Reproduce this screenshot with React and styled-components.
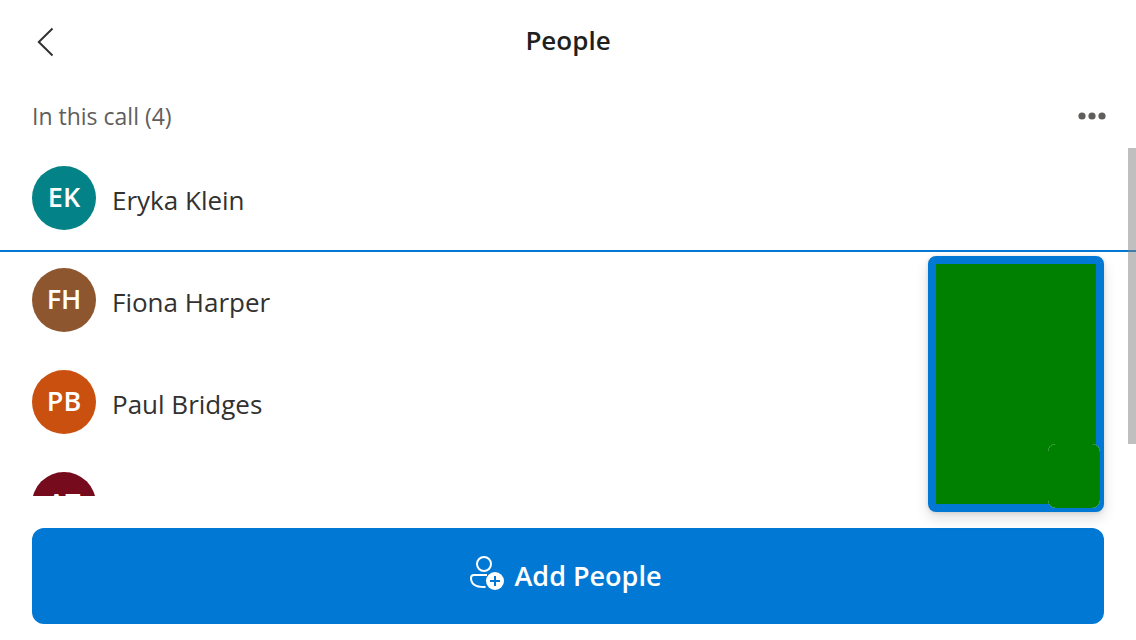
import React from 'react';
import styled, { createGlobalStyle } from 'styled-components';

const GlobalStyle = createGlobalStyle`
  *, *::before, *::after { box-sizing: border-box; }
  body {
    margin: 0;
    background: #fff;
    color: #323130;
    font-family: "Segoe UI", "Open Sans", "Noto Sans", sans-serif;
  }
  button { font: inherit; border: 0; padding: 0; cursor: pointer; }
`;

const Pane = styled.main`
  position: relative;
  display: flex;
  flex-direction: column;
  height: 100vh;
  overflow: hidden;
`;

const Header = styled.header`
  display: grid;
  grid-template-columns: 64px 1fr 64px;
  align-items: center;
  height: 84px;
  flex: none;
`;

const BackButton = styled.button`
  display: flex;
  justify-content: flex-end;
  padding-right: 8px;
  background: none;
  color: #323130;
`;

const Title = styled.h1`
  margin: 0;
  padding-bottom: 4px;
  font-size: 26px;
  line-height: 36px;
  font-weight: 600;
  text-align: center;
  color: #201f1e;
`;

const Subheader = styled.div`
  display: flex;
  align-items: center;
  justify-content: space-between;
  height: 64px;
  padding: 0 28px 0 32px;
  flex: none;
  color: #605e5c;
`;

const Subtitle = styled.h2`
  margin: 0;
  font-size: 23px;
  line-height: 32px;
  font-weight: 400;
`;

const MoreButton = styled.button`
  display: flex;
  background: none;
  color: inherit;
`;

const ListArea = styled.section`
  position: relative;
  flex: 1;
  min-height: 0;
  overflow: hidden;
`;

const List = styled.ul`
  margin: 0;
  padding: 2px 0 0;
  list-style: none;
`;

const Person = styled.li`
  display: flex;
  align-items: center;
  gap: 16px;
  padding: 16px 32px 20px;
  border-bottom: 2px solid ${(p) => (p.$active ? '#0078d4' : 'transparent')};
`;

const Avatar = styled.span`
  display: grid;
  place-items: center;
  width: 64px;
  height: 64px;
  padding-bottom: 2px;
  border-radius: 50%;
  background: ${(p) => p.$color};
  color: #fff;
  font-size: 27px;
  line-height: 36px;
  font-weight: 600;
`;

const Name = styled.span`
  padding-top: 4px;
  font-size: 26px;
  line-height: 36px;
`;

const ScrollThumb = styled.div`
  position: absolute;
  top: 0;
  right: 0;
  width: 8px;
  height: 85%;
  background: rgba(128, 128, 128, 0.5);
`;

const Footer = styled.footer`
  flex: none;
  padding: 32px 32px 16px;
`;

const AddButton = styled.button`
  display: flex;
  align-items: center;
  justify-content: center;
  gap: 10px;
  width: 100%;
  height: 96px;
  border-radius: 12px;
  background: #0078d4;
  color: #fff;
`;

const AddLabel = styled.span`
  padding-right: 6px;
  font-size: 27px;
  line-height: 36px;
  font-weight: 600;
`;

const RemoteVideo = styled.aside`
  position: absolute;
  right: 32px;
  bottom: 128px;
  width: 176px;
  height: 256px;
  border: 8px solid #0078d4;
  border-radius: 8px;
  background: #008000;
  box-shadow: 0 6px 14px rgba(0, 0, 0, 0.13), 0 1px 4px rgba(0, 0, 0, 0.11);
`;

const LocalVideo = styled.div`
  position: absolute;
  right: -4px;
  bottom: -4px;
  width: 52px;
  height: 64px;
  border-radius: 8px;
  background: #fff;
`;

const LocalStream = styled.div`
  height: 100%;
  border-radius: 8px;
  background: #008000;
`;

const people = [
  { name: 'Eryka Klein', initials: 'EK', color: '#038387', active: true },
  { name: 'Fiona Harper', initials: 'FH', color: '#8e562e' },
  { name: 'Paul Bridges', initials: 'PB', color: '#ca5010' },
  { name: 'Ana Taylor', initials: 'AT', color: '#750b1c' },
];

const BackIcon = () => (
  <svg width="20" height="32" viewBox="0 0 20 32" fill="none" stroke="currentColor" strokeWidth="2" aria-hidden="true">
    <path d="M16.5 2.5 2.8 16l13.7 13.5" />
  </svg>
);

const MoreIcon = () => (
  <svg width="32" height="32" viewBox="0 0 32 32" fill="currentColor" aria-hidden="true">
    <circle cx="6" cy="16" r="3.6" />
    <circle cx="16" cy="16" r="3.6" />
    <circle cx="26" cy="16" r="3.6" />
  </svg>
);

const AddPersonIcon = () => (
  <svg width="36" height="40" viewBox="0 0 36 40" fill="none" stroke="currentColor" strokeWidth="2" aria-hidden="true">
    <circle cx="16" cy="8" r="7" />
    <path d="M19 19H6a3 3 0 0 0-3 3c0 6 5 9 13 9h1.500" />
    <circle cx="27" cy="25" r="9" fill="currentColor" stroke="none" />
    <path d="M27 20v10M22 25h10" stroke="#0078d4" />
  </svg>
);

export default function App() {
  return (
    <>
      <GlobalStyle />
      <Pane>
        <Header>
          <BackButton type="button" aria-label="Back"><BackIcon /></BackButton>
          <Title>People</Title>
        </Header>
        <Subheader>
          <Subtitle>In this call (4)</Subtitle>
          <MoreButton type="button" aria-label="More options"><MoreIcon /></MoreButton>
        </Subheader>
        <ListArea>
          <List>
            {people.map((p) => (
              <Person key={p.name} $active={p.active}>
                <Avatar $color={p.color} aria-hidden="true">{p.initials}</Avatar>
                <Name>{p.name}</Name>
              </Person>
            ))}
          </List>
          <ScrollThumb />
        </ListArea>
        <Footer>
          <AddButton type="button">
            <AddPersonIcon />
            <AddLabel>Add People</AddLabel>
          </AddButton>
        </Footer>
        <RemoteVideo aria-label="Video">
          <LocalVideo><LocalStream /></LocalVideo>
        </RemoteVideo>
      </Pane>
    </>
  );
}
